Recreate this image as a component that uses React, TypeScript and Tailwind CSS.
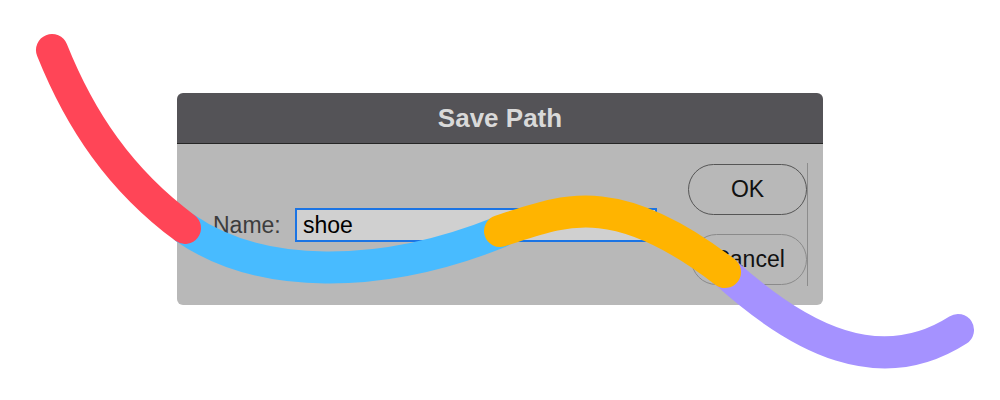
import React from 'react';

const font = { fontFamily: '"Liberation Sans", Arial, sans-serif' };

const Strokes: React.FC = () => (
  <svg
    className="absolute inset-0 pointer-events-none"
    width="1000"
    height="400"
    viewBox="0 0 1000 400"
    fill="none"
    strokeLinecap="round"
    strokeWidth="32"
  >
    <path d="M185 228 C260 280 380 280 500 232" stroke="#48bbff" />
    <path d="M725 272 C800 340 880 380 958 330" stroke="#a592ff" />
    <path d="M52 50 C80 120 120 180 185 228" stroke="#ff4557" />
    <path d="M500 231 C560 212 612 185 725 272" stroke="#ffb400" />
  </svg>
);

const App: React.FC = () => {
  return (
    <div className="relative w-[1000px] h-[400px] bg-white overflow-hidden" style={font}>
      {/* Dialog */}
      <div className="ml-[177px] mt-[93px] w-[646px] rounded-md overflow-hidden">
        <div className="h-[51px] bg-[#545357] border-b border-[#262626] flex items-center justify-center">
          <span className="text-[26px] font-bold text-[#d9d9d9]">Save Path</span>
        </div>
        <div className="h-[161px] bg-[#b8b8b8] flex">
          <div className="flex-1 pt-[64px] pl-[36px] flex items-start">
            <label className="w-[82px] h-[34px] flex items-center text-[23px] text-[#3d3d3d]">Name:</label>
            <div className="w-[362px] h-[34px] bg-[#d0d0d0] border-2 border-[#1b74e4] flex items-center pl-[6px] text-[23px] text-black">
              shoe
            </div>
          </div>
          <div className="pt-[19px] pr-[15px]">
            <div className="flex flex-col gap-[19px] border-r border-[#8c8c8c] py-px">
              <button className="w-[119px] h-[51px] rounded-full border-[1.5px] border-[#555] text-[23px] text-[#111]">
                OK
              </button>
              <button className="ml-[3px] w-[116px] h-[51px] rounded-full border-[1.5px] border-[#8a8a8a] text-[23px] text-[#111]">
                Cancel
              </button>
            </div>
          </div>
        </div>
      </div>
      <Strokes />
    </div>
  );
};

export default App;
